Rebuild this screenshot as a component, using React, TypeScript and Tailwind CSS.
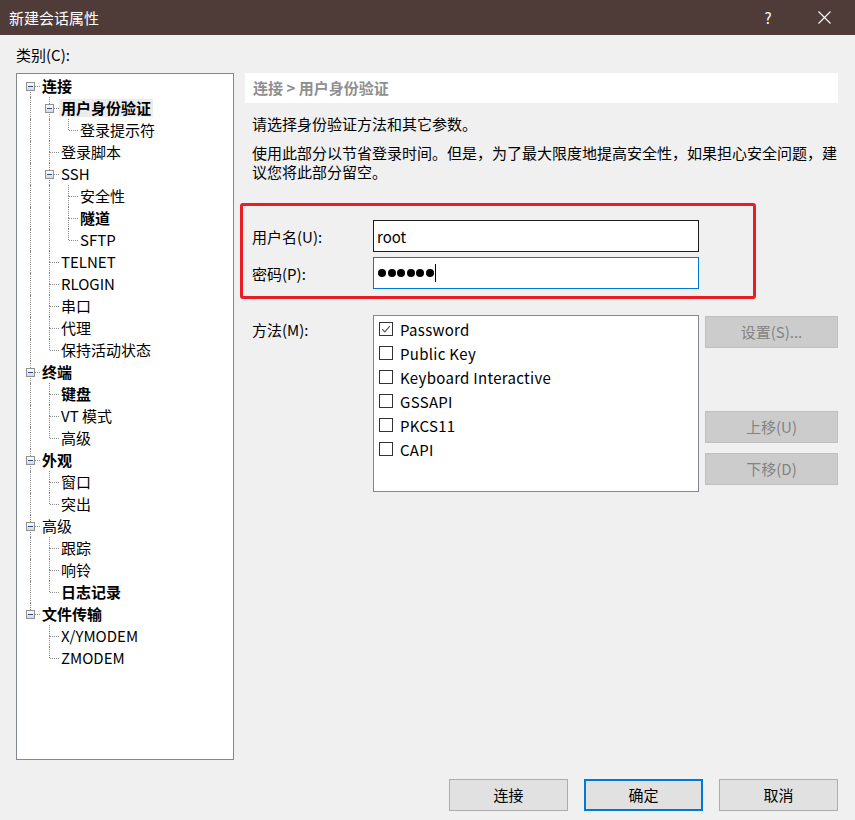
import React from "react";

type Node = { label: string; bold?: boolean; selected?: boolean; children?: Node[] };

const tree: Node[] = [
  {
    label: "连接",
    bold: true,
    children: [
      { label: "用户身份验证", bold: true, selected: true, children: [{ label: "登录提示符" }] },
      { label: "登录脚本" },
      { label: "SSH", children: [{ label: "安全性" }, { label: "隧道", bold: true }, { label: "SFTP" }] },
      { label: "TELNET" },
      { label: "RLOGIN" },
      { label: "串口" },
      { label: "代理" },
      { label: "保持活动状态" },
    ],
  },
  { label: "终端", bold: true, children: [{ label: "键盘", bold: true }, { label: "VT 模式" }, { label: "高级" }] },
  { label: "外观", bold: true, children: [{ label: "窗口" }, { label: "突出" }] },
  { label: "高级", children: [{ label: "跟踪" }, { label: "响铃" }, { label: "日志记录", bold: true }] },
  { label: "文件传输", bold: true, children: [{ label: "X/YMODEM" }, { label: "ZMODEM" }] },
];

type Row = {
  label: string;
  bold?: boolean;
  selected?: boolean;
  level: number;
  isLast: boolean;
  isFirstRoot: boolean;
  hasChildren: boolean;
  ancestorsLast: boolean[];
};

function flatten(nodes: Node[], level: number, ancestorsLast: boolean[], out: Row[]) {
  nodes.forEach((n, i) => {
    const isLast = i === nodes.length - 1;
    out.push({
      label: n.label,
      bold: n.bold,
      selected: n.selected,
      level,
      isLast,
      isFirstRoot: level === 0 && i === 0,
      hasChildren: !!n.children?.length,
      ancestorsLast,
    });
    if (n.children) flatten(n.children, level + 1, [...ancestorsLast, isLast], out);
  });
  return out;
}

const rows = flatten(tree, 0, [], []);

function TreeRow({ r }: { r: Row }) {
  const cells = [];
  for (let j = 0; j < r.level; j++) {
    cells.push(
      <div key={j} className="relative w-[19px] h-[22px] shrink-0">
        {!r.ancestorsLast[j] && (
          <span className="absolute left-[9px] top-0 h-[22px] border-l border-dotted border-[#8a8a8a]" />
        )}
      </div>
    );
  }
  return (
    <div className="flex h-[22px] items-center pl-[4px]">
      {cells}
      <div className="relative w-[19px] h-[22px] shrink-0">
        {!r.isFirstRoot && (
          <span className="absolute left-[9px] top-0 h-[11px] border-l border-dotted border-[#8a8a8a]" />
        )}
        {!r.isLast && (
          <span className="absolute left-[9px] top-[11px] h-[11px] border-l border-dotted border-[#8a8a8a]" />
        )}
        <span className="absolute left-[10px] right-0 top-[11px] border-t border-dotted border-[#8a8a8a]" />
        {r.hasChildren && (
          <span className="absolute left-[5px] top-[7px] w-[9px] h-[9px] border border-[#919191] bg-[linear-gradient(180deg,#ffffff,#d8d8d8)]">
            <span className="absolute left-[1px] top-[3px] w-[5px] h-[1px] bg-[#2d4d8c]" />
          </span>
        )}
      </div>
      <span
        className={
          "px-[2px] leading-[18px] whitespace-nowrap " +
          (r.bold ? "font-bold " : "") +
          (r.selected ? "bg-[#ececec]" : "")
        }
      >
        {r.label}
      </span>
    </div>
  );
}

function CheckItem({ label, checked }: { label: string; checked?: boolean }) {
  return (
    <div className="flex h-[24px] items-center pl-[5px]">
      <span className="relative w-[14px] h-[14px] border border-[#333333] bg-white shrink-0">
        {checked && (
          <svg className="absolute left-0 top-0" width="12" height="12" viewBox="0 0 12 12">
            <path d="M2.2 6.2 L4.8 8.8 L9.8 3.2" fill="none" stroke="#555555" strokeWidth="1.2" />
          </svg>
        )}
      </span>
      <span className="ml-[7px] leading-[19px] whitespace-nowrap tracking-[0.3px]">{label}</span>
    </div>
  );
}

function DisabledButton({ label, className }: { label: string; className?: string }) {
  return (
    <div
      className={
        "h-[32px] w-[133px] flex items-center justify-center bg-[#cccccc] border border-[#bfbfbf] text-[#838383] " +
        (className || "")
      }
    >
      {label}
    </div>
  );
}

export default function App() {
  return (
    <div className="w-[855px] h-[820px] bg-[#f0f0f0] flex flex-col text-[15px] text-black font-['Noto_Sans_CJK_SC',sans-serif] overflow-hidden">
      {/* Title bar */}
      <div className="h-[35px] bg-[#4f3c39] flex items-center pl-[9px] pr-[24px] text-white shrink-0">
        <span className="leading-[20px]">新建会话属性</span>
        <span className="ml-auto w-[14px] text-center leading-[20px]">?</span>
        <svg className="ml-[43px]" width="13" height="13" viewBox="0 0 13 13">
          <path d="M0.5 0.5 L12.5 12.5 M12.5 0.5 L0.5 12.5" stroke="#ffffff" strokeWidth="1.1" />
        </svg>
      </div>

      {/* Main */}
      <div className="flex pl-[16px] pt-[11px]">
        <div className="w-[218px] shrink-0">
          <div className="h-[27px] leading-[18px]">类别(C):</div>
          <div className="h-[687px] border border-[#828790] bg-white pt-[1px]">
            {rows.map((r, i) => (
              <TreeRow key={i} r={r} />
            ))}
          </div>
        </div>

        <div className="ml-[11px] w-[593px] pt-[27px] flex flex-col">
          <div className="h-[30px] bg-white pl-[8px] flex items-center font-bold text-[#8f8f8f]">
            连接 &gt; 用户身份验证
          </div>
          <div className="mt-[11px] pl-[7px] leading-[19px]">请选择身份验证方法和其它参数。</div>
          <div className="mt-[10px] pl-[7px] leading-[19px]">
            使用此部分以节省登录时间。但是，为了最大限度地提高安全性，如果担心安全问题，建议您将此部分留空。
          </div>

          <div className="mt-[22px] -ml-[5px] w-[516px] border-[3px] border-[#ec1c24] rounded-[3px] pt-[14px] pb-[7px] pl-[9px]">
            <div className="flex items-center h-[32px]">
              <span className="w-[121px] leading-[19px]">用户名(U):</span>
              <div className="w-[326px] h-[32px] border border-[#1e1e1e] bg-white flex items-center pl-[3px]">
                <span className="leading-[19px]">root</span>
              </div>
            </div>
            <div className="flex items-center h-[32px] mt-[5px]">
              <span className="w-[121px] leading-[19px]">密码(P):</span>
              <div className="w-[326px] h-[32px] border border-[#0078d7] bg-white flex items-center pl-[4px]">
                <div className="flex items-center gap-[1.6px]">
                  {[0, 1, 2, 3, 4, 5].map((i) => (
                    <span key={i} className="w-[8px] h-[8px] rounded-full bg-black" />
                  ))}
                </div>
                <span className="ml-[1px] w-[1px] h-[18px] bg-black" />
              </div>
            </div>
          </div>

          <div className="mt-[16px] pl-[7px] flex">
            <span className="w-[121px] pt-[5px] leading-[19px]">方法(M):</span>
            <div className="w-[326px] h-[177px] border border-[#828790] bg-white pt-[1px]">
              <CheckItem label="Password" checked />
              <CheckItem label="Public Key" />
              <CheckItem label="Keyboard Interactive" />
              <CheckItem label="GSSAPI" />
              <CheckItem label="PKCS11" />
              <CheckItem label="CAPI" />
            </div>
            <div className="ml-[6px] flex flex-col">
              <DisabledButton label="设置(S)..." className="mt-[1px]" />
              <DisabledButton label="上移(U)" className="mt-[63px]" />
              <DisabledButton label="下移(D)" className="mt-[10px]" />
            </div>
          </div>
        </div>
      </div>

      {/* Footer */}
      <div className="mt-[19px] flex justify-end gap-[16px] pr-[17px]">
        <div className="w-[119px] h-[32px] flex items-center justify-center bg-[#e1e1e1] border border-[#adadad]">连接</div>
        <div className="w-[119px] h-[32px] flex items-center justify-center bg-[#e1e1e1] border-2 border-[#0078d7]">确定</div>
        <div className="w-[119px] h-[32px] flex items-center justify-center bg-[#e1e1e1] border border-[#adadad]">取消</div>
      </div>
    </div>
  );
}
